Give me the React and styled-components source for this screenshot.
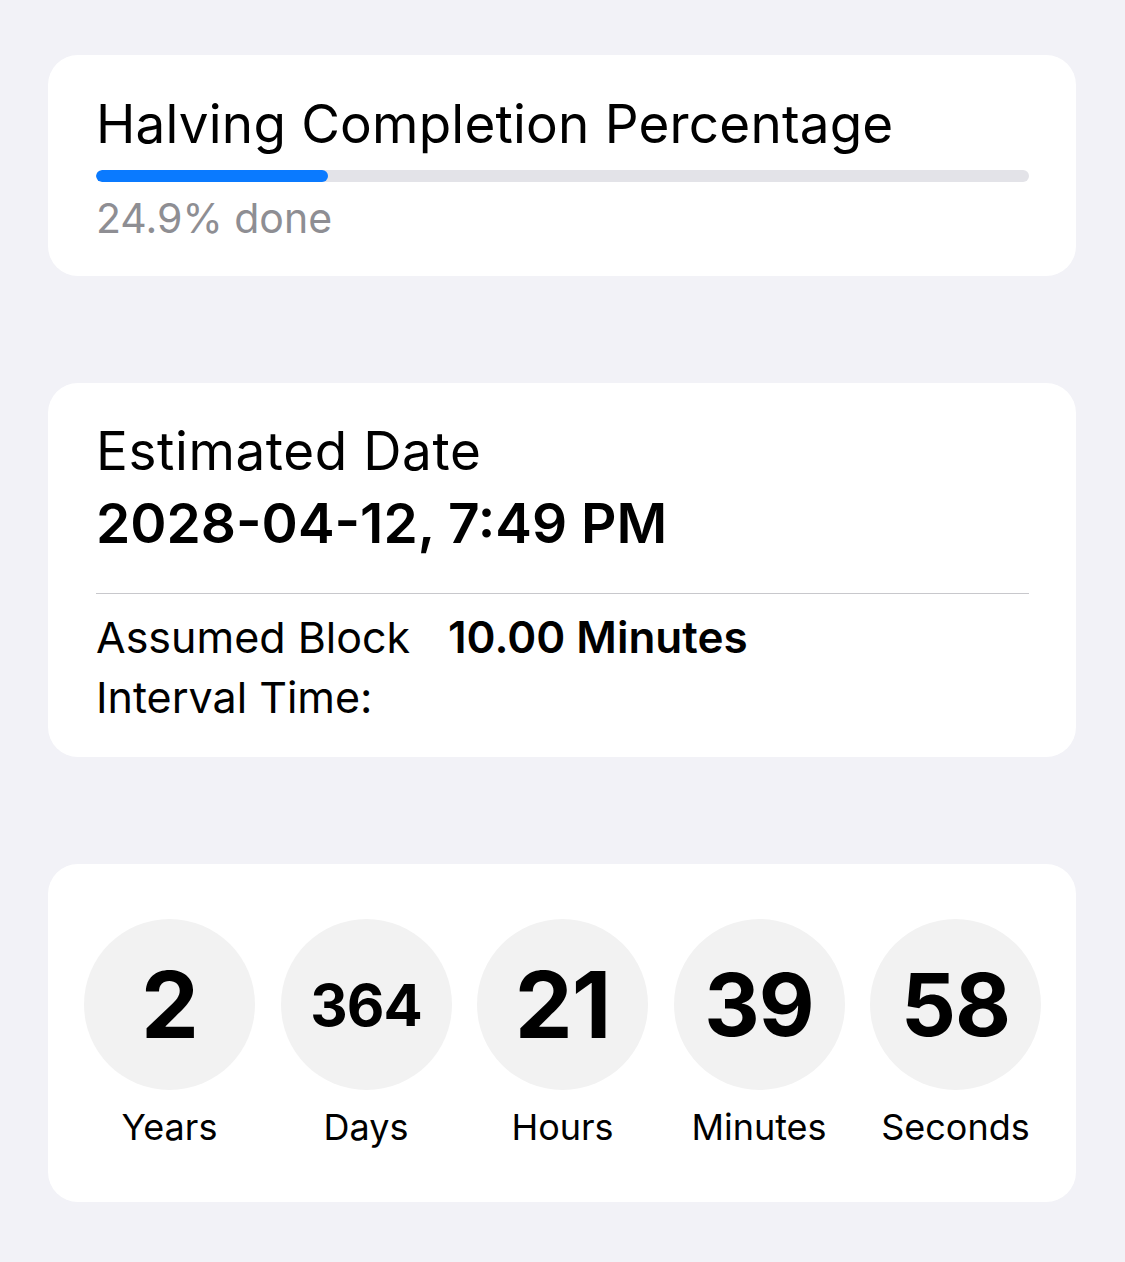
import React from 'react';
import styled, { createGlobalStyle } from 'styled-components';

const GlobalStyle = createGlobalStyle`
  body {
    margin: 0;
    background: #f2f2f7;
    font-family: Inter, "Noto Sans", "Liberation Sans", sans-serif;
    color: #000;
  }
`

const Page = styled.div`
  display: flex;
  flex-direction: column;
  gap: 107px;
  padding: 55px 49px 60px 48px;
`

const Card = styled.div`
  background: #ffffff;
  border-radius: 30px;
  padding: ${p => p.$pad || '32px 48px 32px 48px'};
`

const Title = styled.div`
  font-size: 53px;
  line-height: 60px;
  letter-spacing: ${p => p.$spacing || 0}px;
`

const Track = styled.div`
  margin-top: 16px;
  height: 12px;
  border-radius: 6px;
  background: #e3e3e8;
  overflow: hidden;
`

const Fill = styled.div`
  height: 100%;
  border-radius: 6px;
  background: #0a7aff;
`

const Caption = styled.div`
  margin-top: 11px;
  font-size: 41px;
  line-height: 50px;
  color: #8e8e93;
`

const DateValue = styled.div`
  margin-top: 9px;
  font-size: 55px;
  line-height: 66px;
  font-weight: 600;
`

const Divider = styled.div`
  margin-top: 37px;
  height: 1px;
  background: #c8c8cc;
`

const InfoRow = styled.div`
  display: grid;
  grid-template-columns: 352px 1fr;
  padding-top: 13px;
  font-size: 43px;
  line-height: 60px;
`

const InfoValue = styled.div`
  font-size: 44px;
  font-weight: 600;
`

const Counters = styled.div`
  display: flex;
  justify-content: space-between;
`

const Unit = styled.div`
  display: flex;
  flex-direction: column;
  align-items: center;
  width: 171px;
`

const Circle = styled.div`
  width: 171px;
  height: 171px;
  border-radius: 50%;
  background: #f2f2f2;
  display: flex;
  align-items: center;
  justify-content: center;
  font-weight: 700;
  font-size: ${p => p.$size}px;
  letter-spacing: -1px;
`

const UnitLabel = styled.div`
  margin-top: 15px;
  font-size: 36px;
  line-height: 44px;
`

const units = [
  { value: '2', label: 'Years', size: 92 },
  { value: '364', label: 'Days', size: 58 },
  { value: '21', label: 'Hours', size: 92 },
  { value: '39', label: 'Minutes', size: 86 },
  { value: '58', label: 'Seconds', size: 86 },
];

export default function App() {
  const percent = 24.9;
  return (
    <>
      <GlobalStyle />
      <Page>
        <Card $pad="39px 47px 33px 48px">
          <Title $spacing={0.2}>Halving Completion Percentage</Title>
          <Track>
            <Fill style={{ width: `${percent}%` }} />
          </Track>
          <Caption>{percent}% done</Caption>
        </Card>
        <Card $pad="38px 47px 30px 48px">
          <Title $spacing={0.6}>Estimated Date</Title>
          <DateValue>2028-04-12, 7:49 PM</DateValue>
          <Divider />
          <InfoRow>
            <div>Assumed Block<br />Interval Time:</div>
            <InfoValue>10.00 Minutes</InfoValue>
          </InfoRow>
        </Card>
        <Card $pad="55px 35px 53px 36px">
          <Counters>
            {units.map(u => (
              <Unit key={u.label}>
                <Circle $size={u.size}>{u.value}</Circle>
                <UnitLabel>{u.label}</UnitLabel>
              </Unit>
            ))}
          </Counters>
        </Card>
      </Page>
    </>
  );
}
